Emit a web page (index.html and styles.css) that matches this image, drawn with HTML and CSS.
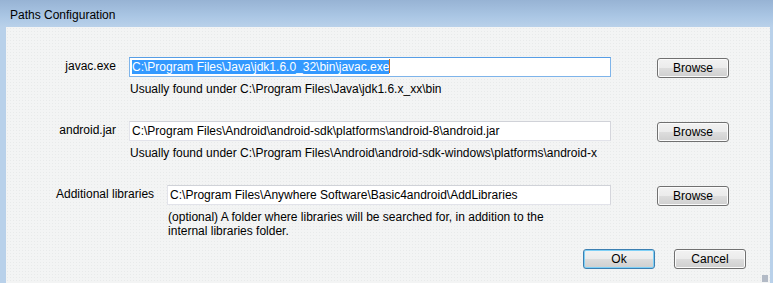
FILE: index.html
```html
<!DOCTYPE html>
<html lang="en">
<head>
    <meta charset="UTF-8">
    <title>Paths Configuration</title>
    <link rel="stylesheet" href="styles.css">
</head>
<body>
    <div class="window">
        <div class="titlebar">Paths Configuration</div>

        <div class="content">
            <div class="row">
                <div class="label">javac.exe</div>
                <div class="field">
                    <div class="textbox focused"><span class="sel">C:\Program Files\Java\jdk1.6.0_32\bin\javac.exe</span><span class="caret"></span></div>
                    <div class="hint">Usually found under C:\Program Files\Java\jdk1.6.x_xx\bin</div>
                </div>
                <button class="btn">Browse</button>
            </div>

            <div class="row">
                <div class="label">android.jar</div>
                <div class="field">
                    <div class="textbox">C:\Program Files\Android\android-sdk\platforms\android-8\android.jar</div>
                    <div class="hint">Usually found under C:\Program Files\Android\android-sdk-windows\platforms\android-x</div>
                </div>
                <button class="btn">Browse</button>
            </div>

            <div class="row">
                <div class="label">Additional libraries</div>
                <div class="field">
                    <div class="textbox">C:\Program Files\Anywhere Software\Basic4android\AddLibraries</div>
                    <div class="hint">(optional) A folder where libraries will be searched for, in addition to the<br>internal libraries folder.</div>
                </div>
                <button class="btn">Browse</button>
            </div>

            <div class="actions">
                <button class="btn default">Ok</button>
                <button class="btn">Cancel</button>
            </div>

            <div class="grip"></div>
        </div>
    </div>
</body>
</html>
```

FILE: styles.css
```css
* { box-sizing: border-box; }
body {
    margin: 0;
    font-family: 'Liberation Sans', Arial, sans-serif;
    font-size: 12px;
    color: #000;
    background: #b9d1ea;
}
.window {
    width: 773px;
    height: 283px;
    display: flex;
    flex-direction: column;
    overflow: hidden;
}
.titlebar {
    height: 27px;
    padding: 4px 0 0 10px;
    line-height: 23px;
    background: linear-gradient(#97b3d4, #aac6e4 60%, #b9d1ea);
    color: #000;
}
.content {
    flex: 1;
    position: relative;
    margin: 0 3px 0 6px;
    padding: 30px 24px 0 50px;
    background-color: #f3f4f4;
    background-image: radial-gradient(#e8eaea 0.6px, transparent 0.8px);
    background-size: 3px 3px;
    display: flex;
    flex-direction: column;
    gap: 25px;
}
.row {
    display: flex;
    align-items: flex-start;
    padding-right: 17px;
}
.label {
    min-width: 60px;
    text-align: right;
    line-height: 14px;
    padding-top: 2px;
    margin-right: 13px;
    white-space: nowrap;
}
.field {
    flex: 1;
    margin-right: 46px;
}
.textbox {
    height: 20px;
    padding: 0 2px;
    line-height: 18px;
    background: #fff;
    border: 1px solid #e2e3ea;
    border-top-color: #d0d2d8;
    border-right-color: #d5d6dc;
    white-space: nowrap;
    overflow: hidden;
}
.textbox.focused {
    border-color: #7eb4ea;
    border-top-color: #569de5;
}
.sel {
    background: #3399ff;
    color: #fff;
}
.caret {
    display: inline-block;
    width: 1px;
    height: 14px;
    vertical-align: -2px;
    background: #c96a1c;
}
.hint {
    margin-top: 5px;
    padding-left: 1px;
    line-height: 14px;
    white-space: nowrap;
}
.btn {
    width: 72px;
    height: 20px;
    margin-top: 1px;
    padding: 0;
    font-family: inherit;
    font-size: 12px;
    color: #000;
    border: 1px solid #707070;
    border-radius: 3px;
    background: linear-gradient(#f2f2f2, #ebebeb 50%, #dddddd 51%, #cfcfcf);
    box-shadow: inset 0 0 0 1px #fbfbfb;
}
.btn.default {
    border-color: #3c7fb1;
    box-shadow: inset 0 0 0 1px #7fd0f6;
}
.actions {
    display: flex;
    justify-content: flex-end;
    gap: 19px;
    margin-top: -14px;
}
.actions .btn { margin-top: 0; }
.grip {
    position: absolute;
    right: 2px;
    bottom: 1px;
    width: 6px;
    height: 7px;
    background-image: radial-gradient(#b0b8c4 0.7px, transparent 0.9px);
    background-size: 2px 2px;
}
```
